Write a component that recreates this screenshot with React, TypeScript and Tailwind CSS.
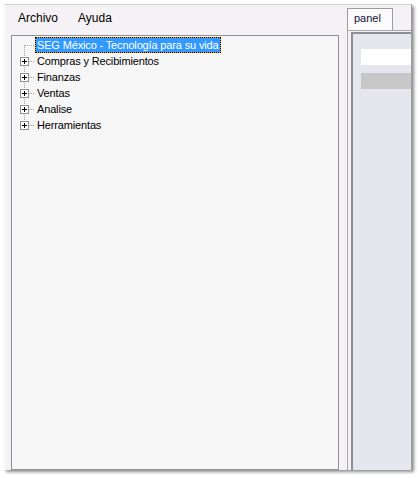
import React from "react";

type Item = { label: string; kind: "root" | "mid" | "last" };

const items: Item[] = [
  { label: "SEG México - Tecnología para su vida", kind: "root" },
  { label: "Compras y Recibimientos", kind: "mid" },
  { label: "Finanzas", kind: "mid" },
  { label: "Ventas", kind: "mid" },
  { label: "Analise", kind: "mid" },
  { label: "Herramientas", kind: "last" },
];

function Connector({ kind }: { kind: Item["kind"] }) {
  const dot = { stroke: "#a0a0a0", strokeWidth: 1, strokeDasharray: "1 1" } as const;
  return (
    <svg width="23" height="16" viewBox="0 0 23 16" shapeRendering="crispEdges" className="shrink-0">
      {kind === "root" && (
        <>
          <line x1="12.5" y1="8" x2="12.5" y2="16" {...dot} />
          <line x1="13" y1="8.5" x2="23" y2="8.5" {...dot} />
        </>
      )}
      {kind !== "root" && (
        <>
          <line x1="12.5" y1="0" x2="12.5" y2={kind === "last" ? 8 : 16} {...dot} />
          <line x1="17" y1="8.5" x2="23" y2="8.5" {...dot} />
          <rect x="8.5" y="4.5" width="8" height="8" fill="#ffffff" stroke="#919191" />
          <line x1="10" y1="8.5" x2="15" y2="8.5" stroke="#000" />
          <line x1="12.5" y1="6" x2="12.5" y2="11" stroke="#000" />
        </>
      )}
    </svg>
  );
}

export default function App() {
  return (
    <div className="w-[420px] h-[478px] bg-white relative overflow-hidden" style={{ fontFamily: '"Liberation Sans", Arial, sans-serif' }}>
      <div className="absolute left-[4px] top-[4px] w-[408px] h-[466px] bg-[#f5f2f5] border-t border-t-[#d4d4d4] border-l border-l-[#fbfbfb] border-r border-r-[#9a9a9a] overflow-hidden shadow-[2px_2px_3px_rgba(0,0,0,0.45)] flex">
        {/* left column */}
        <div className="w-[342px] shrink-0 flex flex-col">
          <div className="h-[30px] pt-[6px] pl-[13px] flex gap-[20px] text-[12px] leading-[14px] text-black">
            <span>Archivo</span>
            <span>Ayuda</span>
          </div>
          <div className="ml-[6px] w-[328px] flex-1 border border-[#8e8f99] bg-[#f7f6f7] pt-[1px] text-[11px] tracking-[-0.15px] text-black">
            {items.map((it) => (
              <div key={it.label} className="flex h-[16px] items-center">
                <Connector kind={it.kind} />
                {it.kind === "root" ? (
                  <span className="inline-block bg-[#e8a040]">
                    <span className="block h-[16px] leading-[14px] px-[1px] border border-dotted border-black bg-[#3399ff] bg-clip-padding text-white whitespace-nowrap">
                      {it.label}
                    </span>
                  </span>
                ) : (
                  <span className="block h-[16px] leading-[16px] px-[2px] whitespace-nowrap">{it.label}</span>
                )}
              </div>
            ))}
          </div>
        </div>
        {/* right column: tab control */}
        <div className="flex-1 flex flex-col pt-[3px] min-w-0">
          <div className="flex h-[22px]">
            <div className="relative z-10 w-[46px] h-[22px] mb-[-1px] border border-b-0 border-[#9c9c9c] bg-[#fbfbfc] pl-[6px] pt-[3px] text-[11px] leading-[13px] text-[#10103a]">
              panel
            </div>
          </div>
          <div className="flex-1 border-t border-l border-[#a8a8b0] pt-[1px] pl-[3px] flex flex-col">
            <div className="flex-1 border-t-2 border-l-2 border-[#8f8f93] bg-[#e6e6ef] pt-[15px] pl-[8px] flex flex-col gap-[8px]">
              <div className="h-[16px] w-[200px] bg-white" />
              <div className="h-[16px] w-[200px] bg-[#c8c6c8]" />
            </div>
          </div>
        </div>
      </div>
    </div>
  );
}
